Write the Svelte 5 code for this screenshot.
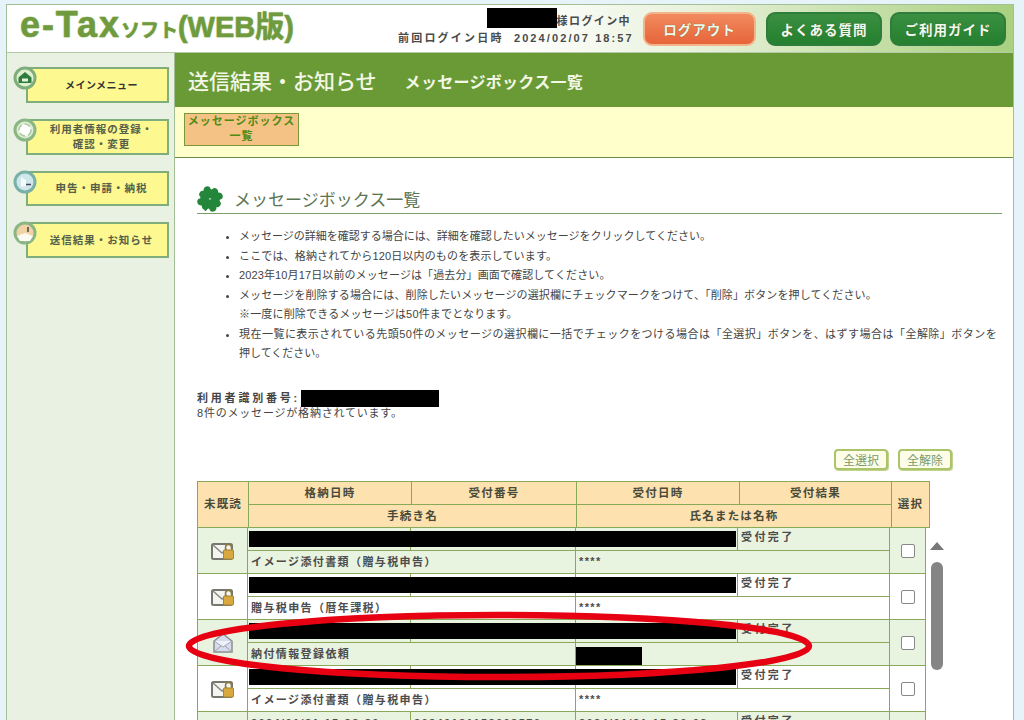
<script>
  // message rows, the last one runs off the bottom of the window
  const rows = [
    { kind: 'lock', name: 'イメージ添付書類（贈与税申告）', who: '****', result: '受付完了', tint: true, hideTop: true },
    { kind: 'lock', name: '贈与税申告（暦年課税）', who: '****', result: '受付完了', tint: false, hideTop: true },
    { kind: 'open', name: '納付情報登録依頼', who: '', result: '受付完了', tint: true, hideTop: true, hideWho: true },
    { kind: 'lock', name: 'イメージ添付書類（贈与税申告）', who: '****', result: '受付完了', tint: false, hideTop: true },
    { kind: 'lock', name: '', who: '', result: '受付完了', tint: true, hideTop: false }
  ];

  // ls = letter spacing of the line, the original text runs a bit wider in places
  const bullets = [
    [{ text: 'メッセージの詳細を確認する場合には、詳細を確認したいメッセージをクリックしてください。', ls: 0 }],
    [{ text: 'ここでは、格納されてから120日以内のものを表示しています。', ls: 0.15 }],
    [{ text: '2023年10月17日以前のメッセージは「過去分」画面で確認してください。', ls: 0.12 }],
    [
      { text: 'メッセージを削除する場合には、削除したいメッセージの選択欄にチェックマークをつけて、「削除」ボタンを押してください。', ls: 0.12 },
      { text: '※一度に削除できるメッセージは50件までとなります。', ls: 0.17 }
    ],
    [
      { text: '現在一覧に表示されている先頭50件のメッセージの選択欄に一括でチェックをつける場合は「全選択」ボタンを、はずす場合は「全解除」ボタンを', ls: 0.47 },
      { text: '押してください。', ls: 0 }
    ]
  ];

  const lobe = 'M13 12C8 11 6 9 6 6c0-3 4-4 5-2 .6 1 1.400 1 2 0 1-2 5-1 5 2 0 3-2 5-5 6z';
</script>

{#snippet lockMail()}
  <svg width="24" height="20" viewBox="0 0 24 20">
    <rect x="1" y="3" width="20" height="15" rx="1.5" fill="#f4f4f0" stroke="#77776f" stroke-width="2" />
    <path d="M2 4l9 8 5-4" fill="none" stroke="#8a8a82" stroke-width="1.5" />
    <path d="M14.5 9V6.5a3 3 0 0 1 6 0V9" fill="none" stroke="#8a7a40" stroke-width="1.5" />
    <rect x="12.5" y="9" width="10" height="9" rx="1" fill="#d9a93f" stroke="#a5882f" />
  </svg>
{/snippet}

{#snippet openMail()}
  <svg width="22" height="22" viewBox="0 0 22 22">
    <path d="M2 9L11 2l9 7v11H2z" fill="#d5dcee" stroke="#8a8f8f" stroke-width="1.5" />
    <path d="M2 9l9 6 9-6" fill="#eef1f8" stroke="#a0a8b8" />
    <path d="M2 20l7-6M20 20l-7-6" stroke="#9aa0a8" />
  </svg>
{/snippet}

<div class="page">
  <div class="frame">
    <header class="top">
      <div class="logo"><span class="big">e-Tax</span><span class="small">ソフト</span>(WEB版)</div>
      <div class="login">
        <div class="who"><span class="hide name"></span>様ログイン中</div>
        <div><span class="label">前回ログイン日時</span>&nbsp; 2024/02/07 18:57</div>
      </div>
      <button class="top-btn orange">ログアウト</button>
      <button class="top-btn green">よくある質問</button>
      <button class="top-btn green">ご利用ガイド</button>
    </header>

    <div class="main">
      <nav class="side">
        <a class="item">
          <span class="ring">
            <svg width="24" height="24" viewBox="0 0 24 24">
              <circle cx="12" cy="12" r="10" fill="#dff0d0" stroke="#7fae7c" stroke-width="3" />
              <path d="M5.5 11.5L12 6l6.500 5.500V17h-13z" fill="#2f7d3c" />
              <rect x="9" y="12.500" width="6" height="3" fill="#e8f3dc" />
            </svg>
          </span>
          <span class="one dark">メインメニュー</span>
        </a>
        <a class="item">
          <span class="ring">
            <svg width="24" height="24" viewBox="0 0 24 24">
              <circle cx="12" cy="12" r="10" fill="#dcecd0" stroke="#8ab686" stroke-width="3" />
              <circle cx="12" cy="12" r="6" fill="#fff" stroke="#a9c9a0" stroke-width="1.5" stroke-dasharray="6 3" />
            </svg>
          </span>
          <span>利用者情報の登録・<br />確認・変更</span>
        </a>
        <a class="item short">
          <span class="ring">
            <svg width="24" height="24" viewBox="0 0 24 24">
              <circle cx="12" cy="12" r="10" fill="#cfe6ea" stroke="#79b0a8" stroke-width="3" />
              <path d="M8 7l5 3v6l-5 1z" fill="#f6fafa" />
              <path d="M13 14.500h5" stroke="#446" stroke-width="1.500" />
            </svg>
          </span>
          <span>申告・申請・納税</span>
        </a>
        <a class="item">
          <span class="ring">
            <svg width="24" height="24" viewBox="0 0 24 24">
              <circle cx="12" cy="12" r="10" fill="#f2d3a6" stroke="#8ab686" stroke-width="3" />
              <path d="M4 15l8-3 8 3-3 5H7z" fill="#fbfbf4" />
              <path d="M15 6v5" stroke="#444" stroke-width="1.500" />
            </svg>
          </span>
          <span>送信結果・お知らせ</span>
        </a>
      </nav>

      <section class="content">
        <div class="title">
          <h1>送信結果・お知らせ</h1>
          <h2>メッセージボックス一覧</h2>
        </div>
        <div class="tabs">
          <div class="tab">メッセージボックス<br />一覧</div>
        </div>

        <div class="body">
          <div class="heading">
            <svg width="26" height="26" viewBox="2.500 2 21 21">
              <g fill="#23863a" transform="rotate(15 13 12.500)">
                {#each [0, 90, 180, 270] as turn}
                  <path d={lobe} transform="rotate({turn} 13 12.500)" />
                {/each}
              </g>
              <path d="M13 13q-1 5-4 9" fill="none" stroke="#23863a" stroke-width="1.500" />
            </svg>
            <h3>メッセージボックス一覧</h3>
          </div>

          <ul class="notes">
            {#each bullets as lines}
              <li>
                {#each lines as line, i}
                  {#if i > 0}<br />{/if}<span style="letter-spacing: {line.ls}px">{line.text}</span>
                {/each}
              </li>
            {/each}
          </ul>

          <div class="ident">
            <div class="id-line">利用者識別番号:<span class="hide id"></span></div>
            <div class="count">8件のメッセージが格納されています。</div>
          </div>

          <div class="actions">
            <button class="mini">全選択</button>
            <button class="mini">全解除</button>
          </div>

          <div class="thead">
            <div class="th unread">未既読</div>
            <div class="th">格納日時</div>
            <div class="th">受付番号</div>
            <div class="th">受付日時</div>
            <div class="th">受付結果</div>
            <div class="th pick">選択</div>
            <div class="th wide-a">手続き名</div>
            <div class="th wide-b">氏名または名称</div>
          </div>

          <div class="tbody-wrap">
            <div class="tbody">
              {#each rows as row}
                <div class="row" class:tint={row.tint}>
                  <div class="icon-cell">
                    {#if row.kind === 'lock'}
                      {@render lockMail()}
                    {:else}
                      {@render openMail()}
                    {/if}
                  </div>
                  <div class="td">{row.hideTop ? '' : '2024/01/31 15:33:20'}</div>
                  <div class="td">{row.hideTop ? '' : '20240131153603576'}</div>
                  <div class="td">{row.hideTop ? '' : '2024/01/31 15:36:03'}</div>
                  <div class="td strong">{row.result}</div>
                  <div class="pick-cell"><span class="check"></span></div>
                  <div class="td span-a">{row.name}</div>
                  <div class="td span-b">
                    {#if row.hideWho}<span class="hide who-box"></span>{:else}{row.who}{/if}
                  </div>
                  {#if row.hideTop}<span class="hide bar"></span>{/if}
                </div>
              {/each}
            </div>
            <div class="scroll">
              <span class="up"></span>
              <span class="thumb"></span>
            </div>
          </div>
        </div>
      </section>
    </div>
  </div>

  <svg class="mark" width="1024" height="720" viewBox="0 0 1024 720">
    <ellipse cx="499" cy="646" rx="310" ry="31" fill="none" stroke="#e60012" stroke-width="6.500" />
  </svg>
</div>

<style>
  :global(body) {
    margin: 0;
  }

  .page {
    position: relative;
    width: 1024px;
    height: 720px;
    overflow: hidden;
    box-sizing: border-box;
    padding: 4px 10px 0 6px;
    background: #e6f3f8;
    font-family: "Liberation Sans", "Noto Sans CJK JP", sans-serif;
    color: #444;
  }

  .frame {
    height: 760px;
    border: 1px solid #a3bf98;
    border-bottom: 0;
    box-sizing: border-box;
  }

  .top {
    display: flex;
    align-items: center;
    height: 48px;
    box-sizing: border-box;
    padding: 0 6px 0 13px;
    background: linear-gradient(90deg, #fff 0%, #fff 50%, #e9f2dc 68%, #a9d07f 100%);
    border-bottom: 1px solid #b5c9a5;
  }

  .logo {
    font-size: 29px;
    font-weight: 700;
    line-height: 40px;
    margin-top: -2px;
    color: #6f9a3e;
    width: 378px;
    white-space: nowrap;
    text-shadow: 0 0 2px #c6d8a8;
    -webkit-text-stroke: 0.5px #6f9a3e;
  }

  .logo .big {
    font-size: 36px;
    letter-spacing: 1.9px;
  }

  .logo .small {
    font-size: 19px;
  }

  .login {
    width: 233px;
    margin-top: 2px;
    font-size: 11px;
    font-weight: 700;
    line-height: 17px;
    text-align: right;
    white-space: nowrap;
    color: #4a4a4a;
    letter-spacing: 2.1px;
  }

  .label {
    letter-spacing: 2.2px;
  }

  .who {
    display: flex;
    justify-content: flex-end;
    align-items: center;
    letter-spacing: 1.4px;
  }

  .name {
    width: 70px;
    height: 20px;
    margin: -6px 0 0;
  }

  .hide {
    display: inline-block;
    background: #000;
  }

  .top-btn {
    height: 34px;
    border-radius: 9px;
    font: 700 13.5px "Noto Sans CJK JP", sans-serif;
    color: #f4f8ec;
    padding: 0;
    letter-spacing: 1px;
    text-shadow: 0 0 1px #3d6a34;
  }

  .orange {
    width: 113px;
    margin-left: 12px;
    margin-right: 10px;
    background: linear-gradient(#f28a5f, #e7643a);
    border: 2px solid #f3b48a;
  }

  .green {
    width: 116px;
    background: linear-gradient(#3b8f41, #24802f);
    border: 2px solid #2f7d3c;
  }

  .green + .green {
    margin-left: 8px;
  }

  .main {
    display: grid;
    grid-template-columns: 168px 1fr;
  }

  .side {
    display: flex;
    flex-direction: column;
    gap: 16px;
    padding: 14px 5px 0 19px;
    background: #e9f1e2;
    border-right: 1px solid #a3bf98;
    height: 660px;
    box-sizing: content-box;
    width: 143px;
  }

  .item {
    position: relative;
    display: flex;
    align-items: center;
    justify-content: center;
    height: 36px;
    box-sizing: border-box;
    background: #fdf88f;
    border: 2px solid #7fae7c;
    font-size: 10.5px;
    font-weight: 700;
    line-height: 15px;
    letter-spacing: 1px;
    text-align: center;
    color: #55604a;
    padding-left: 8px;
  }

  .item.short {
    height: 35px;
  }

  .one.dark {
    color: #333;
    font-size: 10px;
    letter-spacing: 0.5px;
  }

  .ring {
    position: absolute;
    left: -15px;
    top: -3px;
    width: 24px;
    height: 24px;
  }

  .content {
    min-width: 0;
    background: #fff;
  }

  .title {
    display: flex;
    align-items: center;
    height: 54px;
    padding-left: 13px;
    background: #6a9a35;
    color: #f3f7e6;
  }

  .title h1 {
    margin: 0;
    font: 500 21px "Noto Sans CJK JP", sans-serif;
  }

  .title h2 {
    margin: 2px 0 0 28px;
    font: 700 16px "Noto Sans CJK JP", sans-serif;
    letter-spacing: 0.3px;
  }

  .tabs {
    height: 51px;
    box-sizing: border-box;
    padding: 6px 9px 0;
    background: #ffffcc;
    border-bottom: 1px solid #6b8f4a;
  }

  .tab {
    width: 115px;
    height: 33px;
    box-sizing: border-box;
    background: #f5c285;
    border: 1px solid #7a9a3a;
    font-size: 11px;
    font-weight: 700;
    line-height: 15px;
    text-align: center;
    color: #4d8c14;
    letter-spacing: 1px;
  }

  .body {
    padding: 26px 11px 0 22px;
  }

  .heading {
    display: flex;
    align-items: center;
    gap: 11px;
    height: 29px;
    border-bottom: 1px solid #7a9f6a;
  }

  .heading h3 {
    margin: 0;
    font: 400 17px "Noto Sans CJK JP", sans-serif;
    color: #5b7452;
  }

  .notes {
    margin: 13px 0 0;
    padding: 0 0 0 42px;
    font-size: 11px;
    line-height: 19.5px;
    color: #444;
    white-space: nowrap;
  }

  .ident {
    margin-top: 27px;
    font-size: 11px;
    line-height: 15px;
  }

  .id-line {
    display: flex;
    align-items: center;
    height: 15px;
    font-weight: 700;
    letter-spacing: 2.8px;
  }

  .count {
    letter-spacing: 0.8px;
  }

  .id {
    width: 138px;
    height: 17px;
    margin-left: 1px;
  }

  .actions {
    display: flex;
    gap: 10px;
    justify-content: flex-end;
    margin: 28px 50px 0 0;
  }

  .mini {
    width: 54px;
    height: 21px;
    padding: 0;
    background: #fdfde8;
    border: 2px solid #aac46a;
    border-radius: 4px;
    box-shadow: 1px 1px 0 #c3d48e;
    font: 400 12px "Noto Sans CJK JP", sans-serif;
    color: #7c9a6a;
  }

  .thead {
    display: grid;
    grid-template-columns: 51px 163px 165px 163px 152px 37px;
    grid-template-rows: 23px 22px;
    width: 731px;
    margin-top: 11px;
    background: #fde2b0;
    border: 1px solid #8aa85a;
    box-sizing: content-box;
  }

  .th {
    display: flex;
    align-items: center;
    justify-content: center;
    box-sizing: border-box;
    padding-bottom: 2px;
    border-right: 1px solid #8aa85a;
    border-bottom: 1px solid #8aa85a;
    font-size: 11.5px;
    font-weight: 700;
    letter-spacing: 1.2px;
    color: #4a4a3a;
  }

  .unread,
  .pick {
    grid-row: 1 / span 2;
    border-bottom: 0;
  }

  .pick {
    border-right: 0;
    grid-column: 6;
  }

  .wide-a {
    grid-column: 2 / span 2;
    border-bottom: 0;
  }

  .wide-b {
    grid-column: 4 / span 2;
    border-bottom: 0;
  }

  .tbody-wrap {
    display: flex;
  }

  .tbody {
    width: 728px;
    border-left: 1px solid #8aa85a;
    box-sizing: border-box;
  }

  .row {
    position: relative;
    display: grid;
    grid-template-columns: 50px 163px 165px 162px 152px 36px;
    grid-template-rows: 23px 23px;
    height: 46px;
    box-sizing: border-box;
    background: #fff;
    border-bottom: 1px solid #8aa85a;
  }

  .row.tint {
    background: #e8f3e0;
  }

  .icon-cell,
  .pick-cell {
    grid-row: 1 / span 2;
    display: flex;
    align-items: center;
    justify-content: center;
    border-right: 1px solid #8aa85a;
  }

  .pick-cell {
    grid-column: 6;
  }

  .td {
    display: flex;
    align-items: center;
    box-sizing: border-box;
    padding-left: 3px;
    border-right: 1px solid #8aa85a;
    border-bottom: 1px solid #8aa85a;
    font-size: 11px;
    font-weight: 700;
    letter-spacing: 1.4px;
    color: #4c4c4c;
    white-space: nowrap;
    overflow: hidden;
  }

  .td.strong {
    align-items: flex-start;
    padding-top: 2px;
    line-height: 15px;
    letter-spacing: 2.4px;
  }

  .span-a {
    grid-column: 2 / span 2;
    border-bottom: 0;
    padding-bottom: 2px;
  }

  .span-b {
    grid-column: 4 / span 2;
    border-bottom: 0;
    padding-bottom: 2px;
  }

  .bar {
    position: absolute;
    left: 51px;
    top: 3px;
    width: 487px;
    height: 16px;
  }

  .who-box {
    width: 66px;
    height: 18px;
    margin-top: 5px;
    margin-left: -3px;
  }

  .check {
    width: 14px;
    height: 14px;
    box-sizing: border-box;
    background: #fff;
    border: 1px solid #888;
    border-radius: 2px;
  }

  .scroll {
    display: flex;
    flex-direction: column;
    align-items: center;
    width: 17px;
    margin-left: 3px;
    padding-top: 14px;
  }

  .up {
    width: 0;
    height: 0;
    border: 7px solid transparent;
    border-top: 0;
    border-bottom: 8px solid #777;
  }

  .thumb {
    width: 12px;
    height: 108px;
    margin-top: 12px;
    background: #858585;
    border-radius: 6px;
  }

  .mark {
    position: absolute;
    left: 0;
    top: 0;
    pointer-events: none;
  }
</style>
